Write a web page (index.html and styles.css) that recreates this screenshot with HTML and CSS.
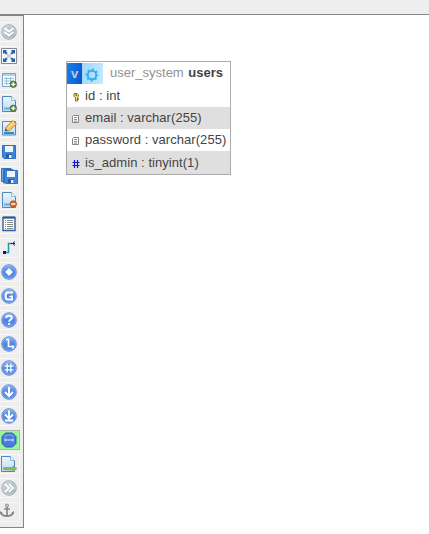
FILE: index.html
```html
<!DOCTYPE html>
<html lang="en">
<head>
<meta charset="utf-8">
<title>Designer</title>
<link rel="stylesheet" href="styles.css">
</head>
<body>
<svg class="defs" width="0" height="0">
<defs>
<linearGradient id="blue" x1="0" y1="0" x2="0" y2="1"><stop offset="0" stop-color="#8db4f4"/><stop offset=".5" stop-color="#4d83e4"/><stop offset="1" stop-color="#608feb"/></linearGradient>
<linearGradient id="gray" x1="0" y1="0" x2="1" y2="1"><stop offset="0" stop-color="#cfd9dd"/><stop offset="1" stop-color="#91a4ad"/></linearGradient>
<linearGradient id="paper" x1="0" y1="0" x2="0" y2="1"><stop offset="0" stop-color="#edf6fd"/><stop offset="1" stop-color="#b8dcf6"/></linearGradient>
<g id="ball"><circle cx="9" cy="9" r="7.3" fill="url(#blue)" stroke="#527dcc" stroke-width=".8"/><circle cx="9" cy="9" r="6.5" fill="none" stroke="#a2c2f7" stroke-width=".5"/></g>
<g id="grayball"><circle cx="9" cy="9" r="7.2" fill="url(#gray)" stroke="#8b9ba3" stroke-width=".9"/><circle cx="9" cy="9" r="6.3" fill="none" stroke="#e4eaed" stroke-width=".7"/></g>
<g id="page"><path d="M2.500 1.500H11.500L15.500 5.500V16.500H2.500Z" fill="url(#paper)" stroke="#5385bd"/><path d="M11.500 1.500V5.500H15.500" fill="#fff" stroke="#8db1d7"/><path d="M4 13.500H13" stroke="#67a8e0" stroke-width="2"/></g>
<g id="disk"><path d="M2.500 2.500H15.500V15.500H4L2.500 14Z" fill="#3d86db" stroke="#2f6fc0"/><path d="M5 3H13V9H5Z" fill="#eef6fc"/><path d="M6 11H12V15H6Z" fill="#2b5c9c"/><path d="M9 12H11.500V15H9Z" fill="#e8f2fb"/></g>
<g id="plus"><circle cx="13.300" cy="13.300" r="3.200" fill="#579143" stroke="#38712d" stroke-width=".8"/><path d="M11.300 13.300H15.300M13.300 11.300V15.300" stroke="#fff" stroke-width="1.300"/></g>
<g id="textfield"><path d="M2.500 1.500H7.500V8.500H1.500V2.500Z" fill="#fff" stroke="#858585" stroke-linejoin="round"/><path d="M3 3.500H6M3 5.500H6M3 7.200H6" stroke="#707070" stroke-width=".8"/></g>
</defs>
</svg>
<header class="topbar"></header>
<main class="workspace">
<nav class="toolbar">
<div class="tool"><svg viewBox="0 0 18 18"><use href="#grayball"/><path d="M4.500 5L9 8.500L13.500 5M4.500 9L9 12.500L13.500 9" fill="none" stroke="#fff" stroke-width="2"/></svg></div>
<div class="tool"><svg viewBox="0 0 18 18"><path d="M1.500 1.500H16.500V16.500H1.500Z" fill="#f6fbff" stroke="#858b94"/><path d="M6 6L12 12M12 6L6 12" stroke="#b5cce4" stroke-width="1.500"/><path d="M3 3H7L6 4.200L7.500 6L6 7.500L4.200 6L3 7ZM15 3V7L13.800 6L12 7.500L10.500 6L12 4.200L11 3ZM3 15V11L4.200 12L6 10.500L7.500 12L6 13.800L7 15ZM15 15H11L12 13.800L10.500 12L12 10.500L13.800 12L15 11Z" fill="#315fa4"/></svg></div>
<div class="tool"><svg viewBox="0 0 18 18"><path d="M2.500 2.500H15.500V15.500H2.500Z" fill="#f8fcff" stroke="#7aa1ce"/><path d="M3 4H15" stroke="#a8d8e8" stroke-width="2"/><path d="M4 7.500H14M4 10H14M4 12.500H12M6.500 6V14M10.500 6V14" stroke="#85b3cf" stroke-width=".8"/><use href="#plus"/></svg></div>
<div class="tool"><svg viewBox="0 0 18 18"><use href="#page"/><use href="#plus"/></svg></div>
<div class="tool"><svg viewBox="0 0 18 18"><path d="M2.500 2.500H15.500V16H2.500Z" fill="url(#paper)" stroke="#5686ba"/><path d="M4 14H14" stroke="#318bd5" stroke-width="2"/><path d="M5 12L6 8L13 1.500L16.500 5L9 12Z" fill="#f5c768" stroke="#a77a3e" stroke-width=".8"/><path d="M5 12L5.800 9.500L7.700 11.500Z" fill="#39424c"/><path d="M8 8.500L14 3" stroke="#ffe9aa"/></svg></div>
<div class="tool"><svg viewBox="0 0 18 18"><use href="#disk"/></svg></div>
<div class="tool"><svg viewBox="0 0 18 18"><path d="M1.500 1.500H11V14.500H1.500Z" fill="#73acec" stroke="#3471bc"/><path d="M3.500 2.500H13V16H3.500Z" fill="#97c5f1" stroke="#3471bc"/><use href="#disk" x="2" y="1"/></svg></div>
<div class="tool"><svg viewBox="0 0 18 18"><use href="#page"/><circle cx="13.300" cy="13" r="3.200" fill="#df692b" stroke="#b64b20" stroke-width=".8"/><path d="M11.300 13H15.300" stroke="#fff" stroke-width="1.500"/></svg></div>
<div class="tool"><svg viewBox="0 0 18 18"><path d="M3 2.500H15V15.500H3Z" fill="#fff" stroke="#315f9e" stroke-width="1.400"/><path d="M3 2.500H15" stroke="#285593" stroke-width="2"/><path d="M5 5.500H6M5 7.500H6M5 9.500H6M5 11.500H6M5 13.500H6M7 5.500H13M7 7.500H13M7 9.500H13M7 11.500H13M7 13.500H13" stroke="#777" stroke-width=".9"/></svg></div>
<div class="tool"><svg viewBox="0 0 18 18"><path d="M4.500 13.500H8.500V4.500H12" fill="none" stroke="#2995ad" stroke-width="1.500"/><path d="M3 12H6V15H3Z" fill="#151580"/><path d="M11 4.500H15M15 2.500L12.500 4.500L15 6.500" fill="none" stroke="#20208e" stroke-width="1"/></svg></div>
<div class="tool"><svg viewBox="0 0 18 18"><use href="#ball"/><path d="M9 5.500L12.500 9L9 12.500L5.500 9Z" fill="#fff" stroke="#fff" stroke-width=".8" stroke-linejoin="round"/></svg></div>
<div class="tool"><svg viewBox="0 0 18 18"><use href="#ball"/><path d="M13 5.500H8Q5.500 5.500 5.500 9T8 12.500H12V9" fill="none" stroke="#fff" stroke-width="2"/><path d="M8.500 9.500L12.500 8V11Z" fill="#fff"/></svg></div>
<div class="tool"><svg viewBox="0 0 18 18"><use href="#ball"/><path d="M6.200 7Q6.200 4.800 9 4.800T11.800 7Q11.800 8.200 10.300 8.900Q9.200 9.500 9.200 10.700" fill="none" stroke="#fff" stroke-width="1.900"/><path d="M8.200 12H10.200V14H8.200Z" fill="#fff"/></svg></div>
<div class="tool"><svg viewBox="0 0 18 18"><use href="#ball"/><path d="M6 4.500H8.500V11.500H13" fill="none" stroke="#fff" stroke-width="1.700"/><path d="M12 10.500H14V13.500H12Z" fill="#fff"/></svg></div>
<div class="tool"><svg viewBox="0 0 18 18"><use href="#ball"/><path d="M7.200 4.500V13.500M10.800 4.500V13.500M4.500 7.200H13.500M4.500 10.800H13.500" stroke="#fff" stroke-width="1.300"/></svg></div>
<div class="tool"><svg viewBox="0 0 18 18"><use href="#ball"/><path d="M9 4V12.500M5 9L9 13L13 9" fill="none" stroke="#fff" stroke-width="2"/></svg></div>
<div class="tool"><svg viewBox="0 0 18 18"><use href="#ball"/><path d="M9 3.500V11M5 7.500L9 11.500L13 7.500M5 13.500H13" fill="none" stroke="#fff" stroke-width="1.900"/></svg></div>
<div class="tool active"><svg viewBox="0 0 18 18"><path d="M5.500 2H12.500L16 5.500V12.500L12.500 16H5.500L2 12.500V5.500Z" fill="#4b7cdc" stroke="#365ba5"/><path d="M4.500 5.500Q9 2 13.500 5.500" fill="none" stroke="#9fc2ff" stroke-width=".8"/><path d="M5 9H13M5 7.500V10.500M13 7.500V10.500" stroke="#e2edff"/></svg></div>
<div class="tool"><svg viewBox="0 0 18 18"><g transform="translate(-1 0)"><use href="#page"/></g><path d="M4.500 12.500H13V10.800L17 13.600L13 16.400V15H4.500Z" fill="#8fba55" stroke="#75a444" stroke-width=".5"/></svg></div>
<div class="tool"><svg viewBox="0 0 18 18"><use href="#grayball"/><path d="M5 5L9 9L5 13M9 5L13 9L9 13" fill="none" stroke="#fff" stroke-width="1.900"/></svg></div>
<div class="tool"><svg viewBox="0 0 18 18"><circle cx="7" cy="2.500" r="1.400" fill="none" stroke="#999" stroke-width="1.200"/><path d="M7 4V13M4 6H10" stroke="#898989" stroke-width="1.700"/><path d="M1 10Q2 13 7 13T13 10" fill="none" stroke="#858585" stroke-width="2"/><path d="M0 11V8L3 10ZM14 11V8L11 10Z" fill="#858585"/></svg></div>
</nav>
<section class="canvas">
<article class="table">
<div class="head">
<span class="toggle">v</span>
<span class="gear"><svg viewBox="0 0 20 22"><circle cx="10" cy="12" r="4.200" fill="none" stroke="#35aef5" stroke-width="1.900"/><circle cx="10" cy="12" r="5.600" fill="none" stroke="#35aef5" stroke-width="1.700" stroke-dasharray="2.200 2.198" stroke-dashoffset="1.100"/></svg></span>
<span class="name"><span class="schema">user_system</span> <b>users</b></span>
</div>
<div class="row"><svg viewBox="0 0 10 10"><path d="M3 1.500H6L7.500 3V4.500L6.500 5.500V9H4.500V5.500L3 4.500Z" fill="#eee16a" stroke="#625b25" stroke-width=".8"/><path d="M4.500 3H6M6.500 7H8" stroke="#242414"/></svg><span>id : int</span></div>
<div class="row shaded"><svg viewBox="0 0 10 10"><use href="#textfield"/></svg><span>email : varchar(255)</span></div>
<div class="row"><svg viewBox="0 0 10 10"><use href="#textfield"/></svg><span>password : varchar(255)</span></div>
<div class="row shaded last"><svg viewBox="0 0 10 10"><path d="M3.500 1V9M6.500 1V9M1.500 3.500H8.500M1.500 6.500H8.500" stroke="#1515d0" stroke-width="1.200"/></svg><span>is_admin : tinyint(1)</span></div>
</article>
</section>
</main>
</body>
</html>
```
FILE: styles.css
```css
* { box-sizing: border-box; }
body {
  margin: 0;
  background: #fff;
  color: #444;
  font-family: "Liberation Sans", Arial, sans-serif;
  font-size: 13px;
}
.defs { display: block; }
.topbar {
  height: 15px;
  background: #eee;
  border-bottom: 1px solid #858585;
}
.workspace { display: flex; align-items: flex-start; }
.toolbar {
  display: flex;
  flex-direction: column;
  gap: 4px;
  width: 24px;
  height: 513px;
  padding-top: 6px;
  background: #eee;
  border: solid #858585;
  border-width: 1px 1px 1px 0;
}
.tool {
  flex: none;
  width: 20px;
  height: 20px;
  border: 1px dotted #fff;
  border-left: 0;
}
.tool svg { display: block; width: 18px; height: 18px; }
.active { background: #99f89b; border: 1px solid #a5bda5; border-left: 0; }
.canvas { padding: 46px 0 0 42px; }
.table {
  width: 165px;
  border: 1px solid #aaa;
  background: #fff;
}
.head { display: flex; height: 23px; align-items: stretch; }
.toggle {
  width: 15px;
  margin: 1px 0;
  padding-top: 2px;
  background: linear-gradient(100deg, #1b80ee, #0656ca);
  color: #c4c8d0;
  font-size: 13px;
  font-weight: bold;
  line-height: 18px;
  text-align: center;
}
.gear { width: 21px; margin: 1px 0; background: linear-gradient(100deg, #a0d6fa, #c4eaff); }
.gear svg { display: block; width: 20px; height: 22px; }
.name { padding-left: 7px; line-height: 22px; white-space: nowrap; }
.schema { color: #929292; }
.name b { margin-left: 1px; }
.row {
  display: flex;
  height: 22px;
  padding-left: 4px;
  letter-spacing: 0.05px;
  line-height: 22px;
  white-space: nowrap;
}
.row svg { flex: none; width: 10px; height: 10px; margin: 7px 4px 0 0; }
.row.last { height: 23px; line-height: 24px; }
.row.last svg { margin-top: 8px; }
.shaded { background: #dfdfdf; }
```
